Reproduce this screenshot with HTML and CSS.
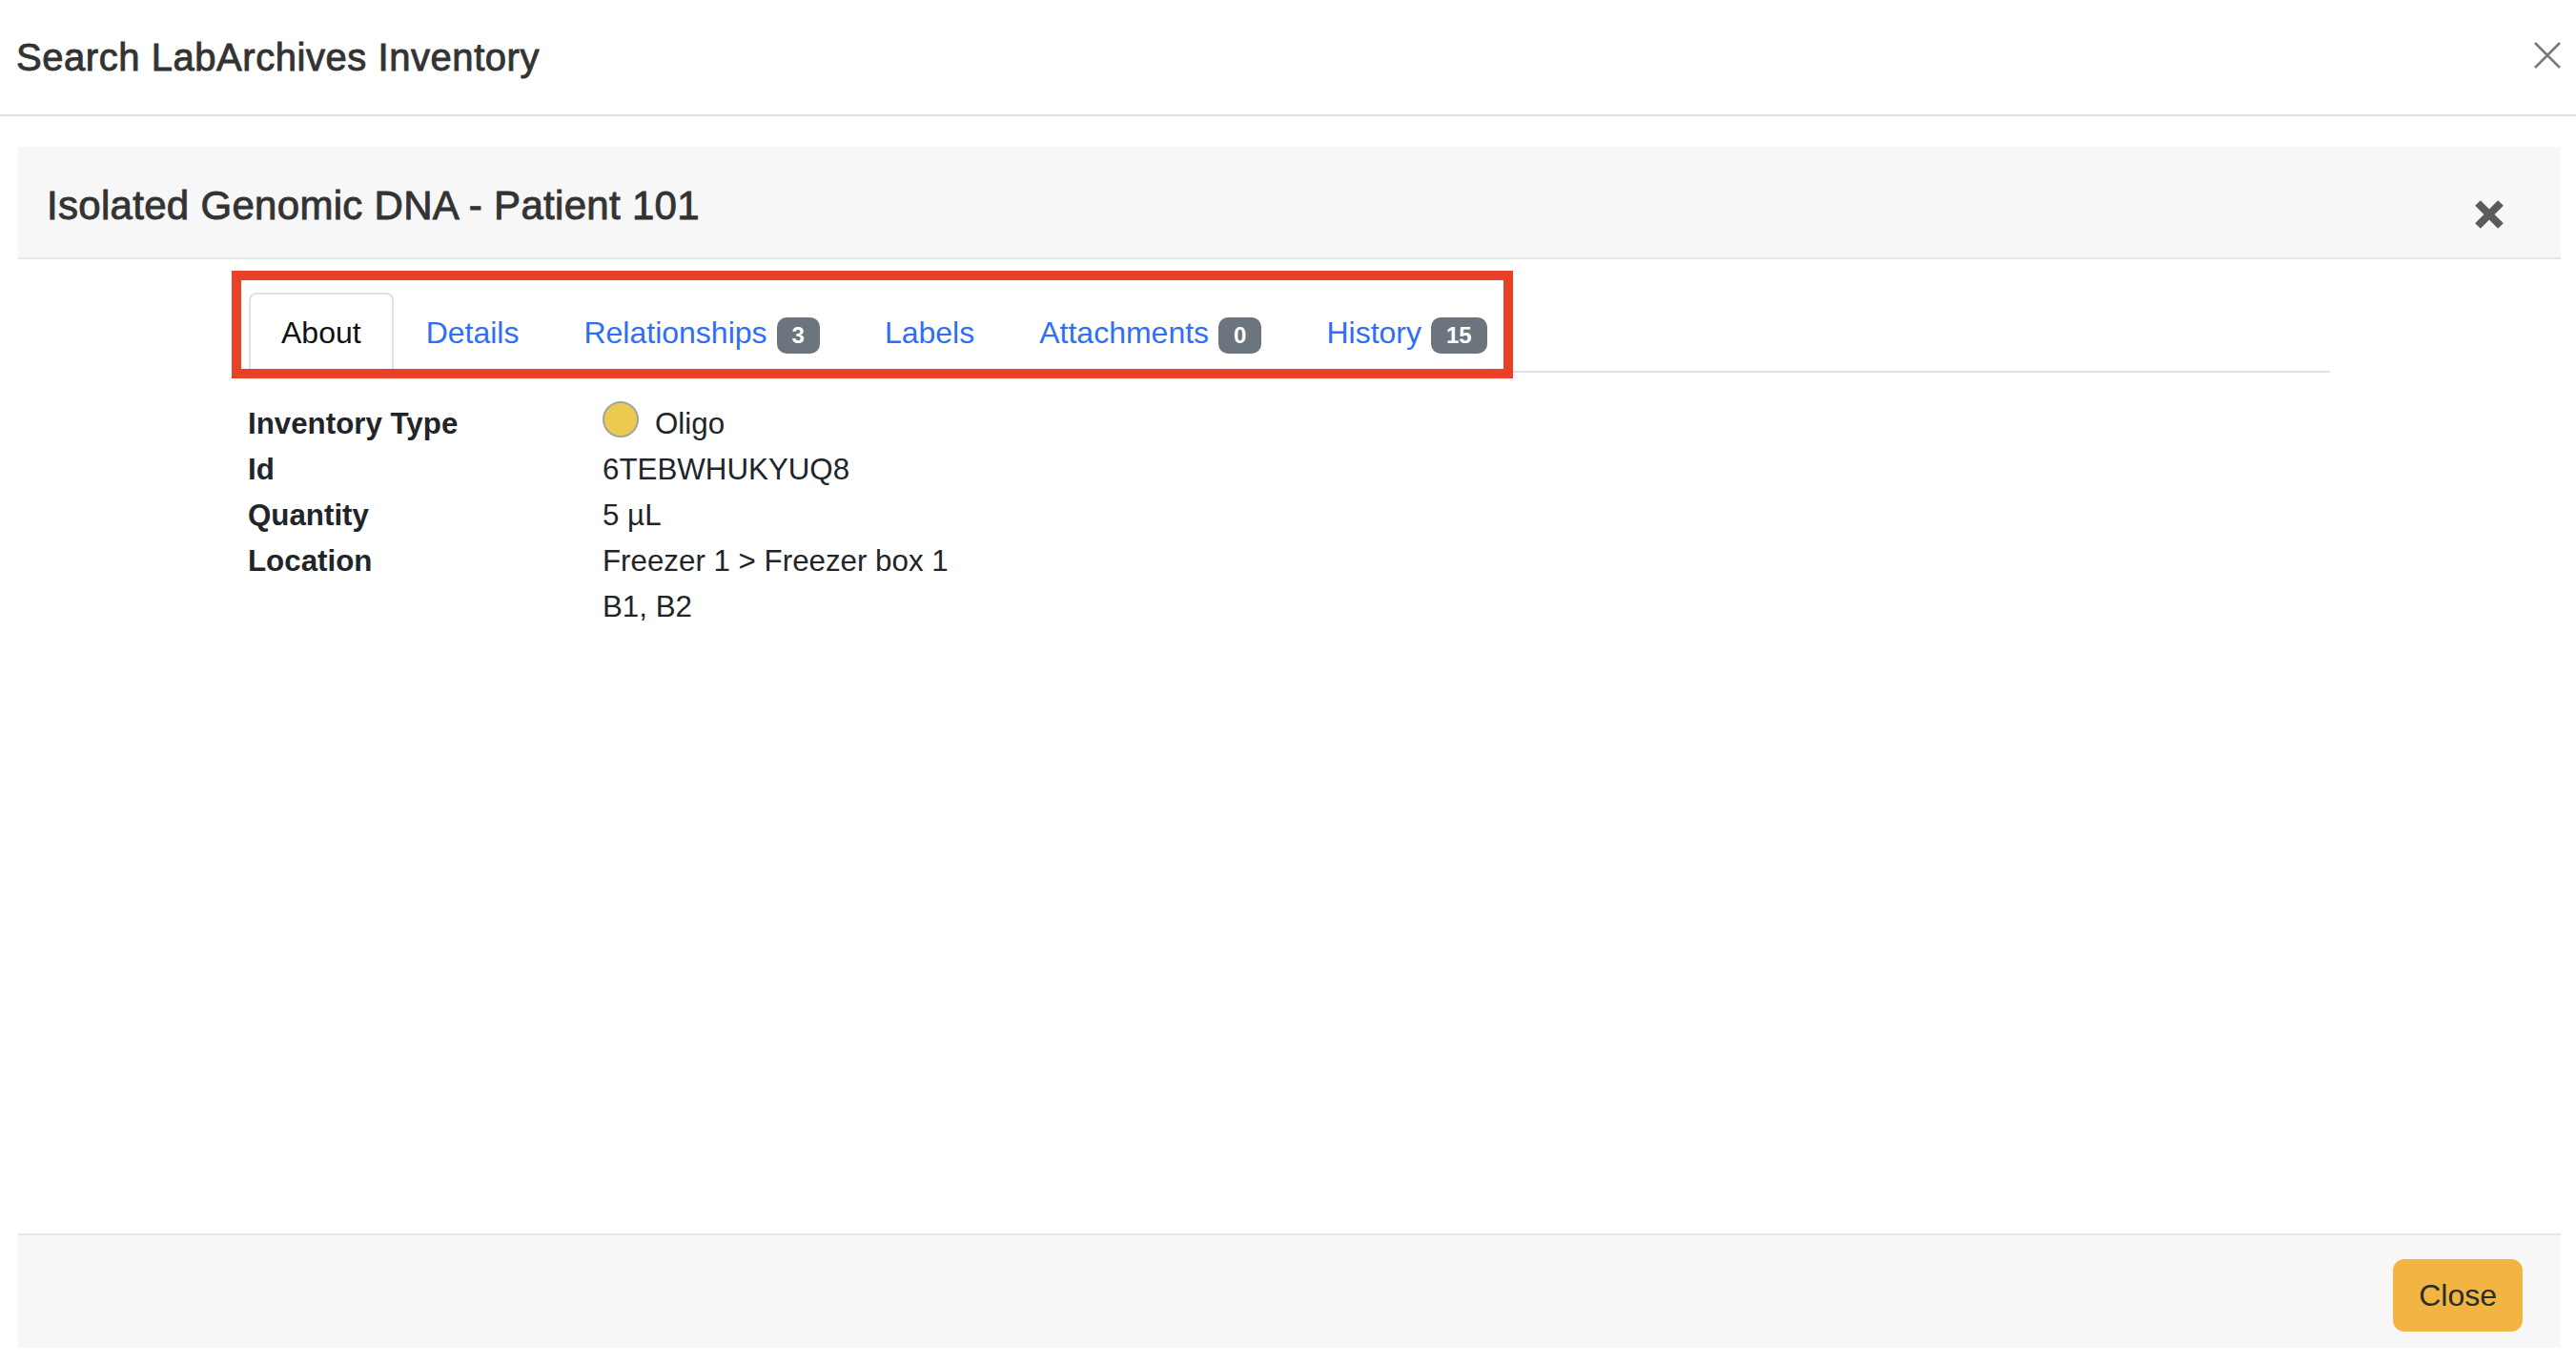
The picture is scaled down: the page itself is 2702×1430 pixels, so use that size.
FILE: index.html
```html
<!DOCTYPE html>
<html lang="en">
<head>
<meta charset="utf-8">
<title>Search LabArchives Inventory</title>
<link rel="stylesheet" href="styles.css">
</head>
<body>
<div class="modal">
  <header class="modal-header">
    <h1 class="modal-title">Search LabArchives Inventory</h1>
    <button class="icon-btn close-thin" aria-label="Close">
      <svg width="28" height="28" viewBox="0 0 28 28"><path d="M1 1L27 27M27 1L1 27" stroke="#7b7b7b" stroke-width="2.6" fill="none"/></svg>
    </button>
  </header>
  <div class="modal-body">
    <section class="card">
      <div class="card-header">
        <h2 class="card-title">Isolated Genomic DNA - Patient 101</h2>
        <button class="icon-btn close-bold" aria-label="Close item">
          <svg width="30" height="30" viewBox="0 0 30 30"><path d="M3 3L27 27M27 3L3 27" stroke="#5b5b5b" stroke-width="8" fill="none"/></svg>
        </button>
      </div>
      <div class="card-body">
        <ul class="tabs">
          <li class="tab active">About</li>
          <li class="tab">Details</li>
          <li class="tab">Relationships<span class="badge">3</span></li>
          <li class="tab">Labels</li>
          <li class="tab">Attachments<span class="badge">0</span></li>
          <li class="tab">History<span class="badge">15</span></li>
        </ul>
        <dl class="props">
          <dt>Inventory Type</dt>
          <dd class="type"><span class="dot"></span><span>Oligo</span></dd>
          <dt>Id</dt>
          <dd>6TEBWHUKYUQ8</dd>
          <dt>Quantity</dt>
          <dd>5 µL</dd>
          <dt>Location</dt>
          <dd><div>Freezer 1 &gt; Freezer box 1</div><div>B1, B2</div></dd>
        </dl>
      </div>
      <footer class="card-footer">
        <button class="btn-close">Close</button>
      </footer>
    </section>
  </div>
</div>
<div class="highlight"></div>
</body>
</html>
```

FILE: styles.css
```css
* { box-sizing: border-box; }

html, body {
  margin: 0;
  height: 100%;
}

body {
  position: relative;
  overflow: hidden;
  background: #fff;
  color: #212529;
  font-family: "Liberation Sans", Helvetica, Arial, sans-serif;
}

.modal {
  display: flex;
  flex-direction: column;
  height: 1430px;
}

.modal-header {
  flex: none;
  height: 122px;
  display: flex;
  align-items: center;
  justify-content: space-between;
  padding: 0 16px 0 17px;
  border-bottom: 2px solid #dee2e6;
}

.modal-title {
  margin: 0;
  font-size: 40px;
  line-height: 48px;
  font-weight: normal;
  color: #333;
  letter-spacing: 0.55px;
  -webkit-text-stroke: 0.9px #333;
}

.icon-btn {
  display: block;
  background: none;
  border: 0;
  padding: 0;
}

.icon-btn svg { display: block; }

.close-thin { margin-bottom: 4px; }

.modal-body {
  flex: 1;
  min-height: 0;
  display: flex;
  flex-direction: column;
  padding: 32px 16px 16px 19px;
}

.card {
  flex: 1;
  display: flex;
  flex-direction: column;
}

.card-header {
  flex: none;
  display: flex;
  align-items: flex-start;
  justify-content: space-between;
  background: #f7f7f7;
  border-bottom: 2px solid #e6e6e6;
  padding: 37px 60px 29px 30px;
}

.card-title {
  margin: 0;
  font-size: 42px;
  line-height: 50px;
  font-weight: normal;
  color: #333;
  letter-spacing: 0.3px;
  -webkit-text-stroke: 0.9px #333;
}

.close-bold { margin-top: 19px; }

.card-body {
  flex: 1;
  padding: 35px 242px 0 241px;
}

.tabs {
  display: flex;
  list-style: none;
  margin: 0;
  padding: 0 0 0 1px;
  border-bottom: 2px solid #dee2e6;
}

.tab {
  font-size: 32px;
  line-height: 48px;
  padding: 16px 32px;
  border: 2px solid transparent;
  border-radius: 8px 8px 0 0;
  margin-bottom: -2px;
  color: #2f6ef6;
  white-space: nowrap;
}

.tab.active {
  color: #111;
  background: #fff;
  border-color: #dee2e6 #dee2e6 #fff;
}

.badge {
  display: inline-block;
  margin-left: 10px;
  padding: 7px 16px;
  font-size: 24px;
  line-height: 24px;
  font-weight: bold;
  color: #fff;
  background: #6c757d;
  border-radius: 10px;
  vertical-align: baseline;
}

.props {
  display: grid;
  grid-template-columns: 372px 1fr;
  margin: 30px 0 0;
  font-size: 31.3px;
  line-height: 48px;
  color: #212529;
}

.props dt {
  grid-column: 1;
  font-weight: bold;
}

.props dd {
  grid-column: 2;
  margin: 0;
}

.props .type {
  display: flex;
  align-items: flex-start;
}

.dot {
  flex: none;
  width: 38px;
  height: 38px;
  margin-right: 17px;
  border-radius: 50%;
  background: #ecc94f;
  border: 2px solid #a3a3a3;
}

.card-footer {
  flex: none;
  display: flex;
  justify-content: flex-end;
  background: #f7f7f7;
  border-top: 2px solid #e6e6e6;
  padding: 25px 40px 17px;
}

.btn-close {
  font-family: inherit;
  font-size: 32px;
  line-height: 48px;
  padding: 14px 27px;
  border: 0;
  border-radius: 12px;
  background: #f2b443;
  color: #2b2b2b;
}

.highlight {
  position: absolute;
  left: 243px;
  top: 284px;
  width: 1344px;
  height: 113px;
  border: 10px solid #e94128;
  pointer-events: none;
}
```
